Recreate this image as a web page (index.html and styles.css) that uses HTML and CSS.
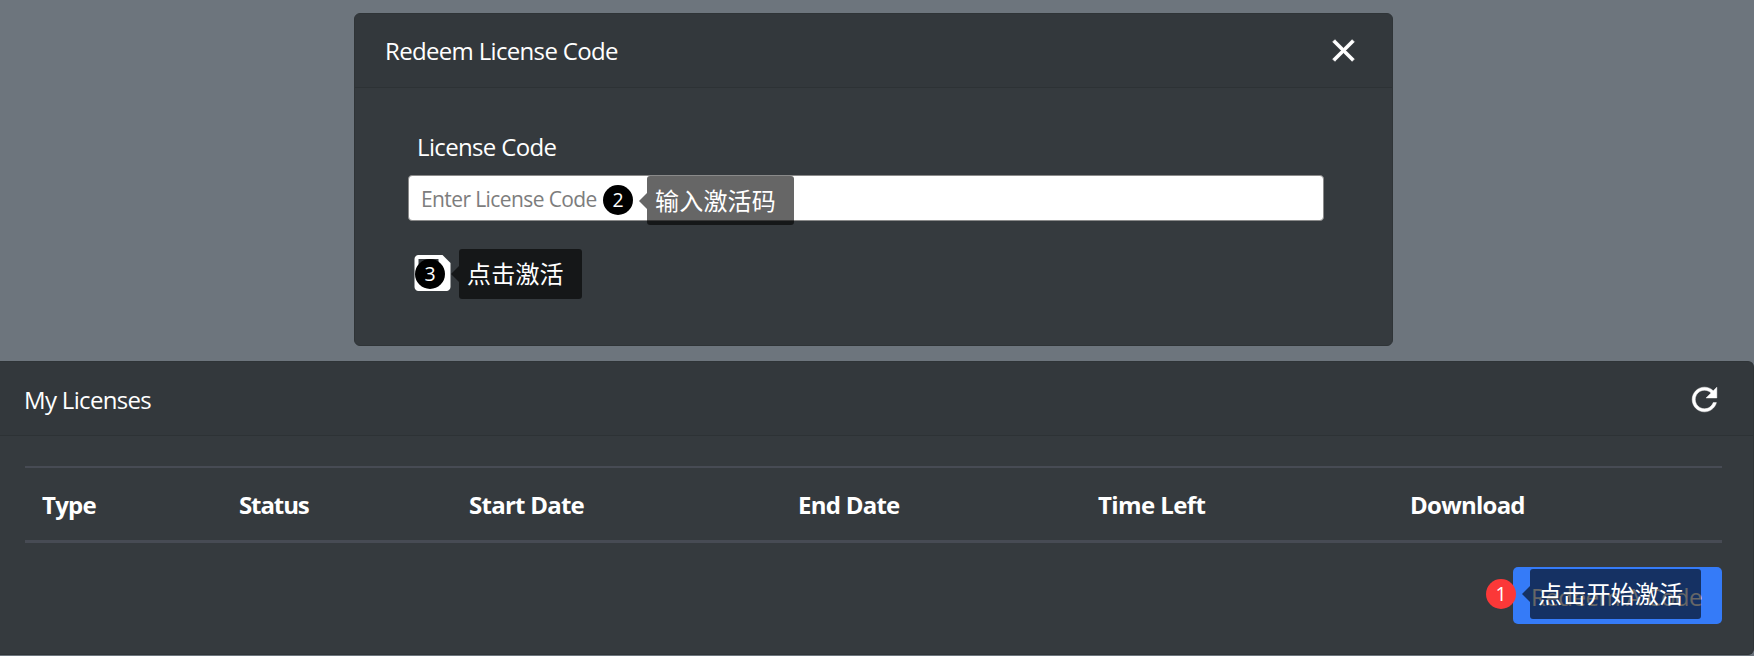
FILE: index.html
```html
<!DOCTYPE html>
<html lang="en">
<head>
<meta charset="utf-8">
<title>My Licenses</title>
<link rel="stylesheet" href="styles.css">
</head>
<body>
<section class="card redeem">
  <header class="card-header redeem-header">
    <h2 class="card-title redeem-title">Redeem License Code</h2>
    <svg class="icon icon-close" viewBox="0 0 24 24"><path d="M19 6.41L17.59 5 12 10.59 6.41 5 5 6.41 10.59 12 5 17.59 6.41 19 12 13.41 17.59 19 19 17.59 13.41 12z"/></svg>
  </header>
  <div class="redeem-body">
    <label class="label">License Code</label>
    <div class="field">
      <span class="placeholder">Enter License Code</span>
      <div class="note note-input">
        <span class="badge">2</span>
        <span class="tip">输入激活码</span>
      </div>
    </div>
    <div class="save">
      <svg class="save-icon" viewBox="0 0 24 24"><path d="M17 3H5c-1.11 0-2 .9-2 2v14c0 1.1.89 2 2 2h14c1.1 0 2-.9 2-2V7l-4-4zm-5 16c-1.66 0-3-1.34-3-3s1.34-3 3-3 3 1.34 3 3-1.34 3-3 3zm3-10H5V5h10v4z"/></svg>
      <div class="note note-save">
        <span class="badge">3</span>
        <span class="tip">点击激活</span>
      </div>
    </div>
  </div>
</section>
<section class="card licenses">
  <header class="card-header licenses-header">
    <h2 class="card-title licenses-title">My Licenses</h2>
    <svg class="icon icon-refresh" viewBox="0 0 24 24"><path d="M17.65 6.35C16.2 4.9 14.21 4 12 4c-4.42 0-7.99 3.58-7.99 8s3.57 8 7.99 8c3.73 0 6.84-2.55 7.73-6h-2.08c-.82 2.33-3.04 4-5.65 4-3.31 0-6-2.69-6-6s2.69-6 6-6c1.66 0 3.14.69 4.22 1.78L13 11h7V4l-2.35 2.35z"/></svg>
  </header>
  <div class="licenses-body">
    <div class="table-head">
      <span class="th">Type</span>
      <span class="th th-status">Status</span>
      <span class="th">Start Date</span>
      <span class="th">End Date</span>
      <span class="th th-left">Time Left</span>
      <span class="th">Download</span>
    </div>
    <div class="redeem-button">
      <span class="button-text">Redeem A Code</span>
      <div class="note note-button">
        <span class="badge badge-red">1</span>
        <span class="tip">点击开始激活</span>
      </div>
    </div>
  </div>
</section>
</body>
</html>
```
FILE: styles.css
```css
* { box-sizing: border-box; }
body {
  margin: 0;
  padding-top: 13px;
  height: 656px;
  overflow: hidden;
  background: #6d757d;
  color: #fff;
  font: 24px/36px "Open Sans", "Noto Sans CJK SC", sans-serif;
}
.card {
  background: #363a3e;
  background: #353a3e;
  border: 1px solid #2f3437;
}
.card-header {
  display: flex;
  justify-content: space-between;
  align-items: center;
  height: 74px;
  background: #33383c;
  border-bottom: 1px solid #2d3235;
}
.card-title { margin: 0; font-size: 24px; font-weight: 400; letter-spacing: -0.67px; }
.icon { width: 37px; height: 37px; fill: #fff; stroke: #fff; stroke-width: .3; }
.icon-close { margin-bottom: 1px; stroke-width: .5; }
.icon-refresh { margin-top: 1px; }

.redeem {
  width: 1039px;
  height: 333px;
  margin: 0 0 15px 354px;
  border-radius: 6px;
}
.redeem-header { padding: 0 30px; border-radius: 5px 5px 0 0; }
.redeem-body { padding: 41px 68px 0 53px; }
.label { display: block; margin-left: 9px; letter-spacing: -0.65px; }
.field {
  position: relative;
  display: flex;
  align-items: center;
  height: 46px;
  margin-top: 10px;
  padding-left: 12px;
  background: #fff;
  border: 1px solid #8a8a8a;
  border-radius: 4px;
}
.placeholder {
  padding-top: 2px;
  font-size: 21px;
  letter-spacing: -0.6px;
  color: #7d7d7d;
}
.save { position: relative; margin-top: 28px; height: 49px; }
.save-icon { display: block; width: 49px; height: 48px; fill: #fff; }

.note { position: absolute; display: flex; align-items: center; z-index: 2; }
.badge {
  width: 30px;
  height: 30px;
  border-radius: 50%;
  background: #000;
  font-size: 19.5px;
  line-height: 29px;
  text-align: center;
}
.badge-red { background: #fb3838; }
.tip {
  position: relative;
  height: 50px;
  margin-left: 14px;
  padding-left: 8px;
  background: rgba(0, 0, 0, .6);
  border-radius: 3px;
  line-height: 50px;
  letter-spacing: .2px;
  white-space: nowrap;
}
.tip::before {
  content: "";
  position: absolute;
  right: 100%;
  top: 17px;
  border: 8px solid transparent;
  border-left: 0;
  border-right-color: rgba(0, 0, 0, .6);
}
.note-input { left: 194px; top: 0; }
.note-input .tip { width: 147px; height: 49px; line-height: 49px; }
.note-input .badge { margin-bottom: 1px; }
.note-save { left: 7px; top: 0; }
.note-save .tip { width: 123px; }
.note-button { left: -27px; top: 2px; }
.note-button .tip { width: 171px; }

.licenses {
  height: 294px;
  border-left: 0;
  border-radius: 0 6px 6px 0;
}
.licenses-header { padding: 0 30px 0 24px; border-radius: 0 5px 0 0; }
.licenses-title { padding-top: 2px; }
.licenses-body {
  display: flex;
  flex-direction: column;
  padding: 30px 31px 0 25px;
}
.table-head {
  display: grid;
  grid-template-columns: 197px 230px 329px 300px 312px 1fr;
  align-items: center;
  height: 77px;
  padding: 2px 0 0 17px;
  border-top: 2px solid #474b54;
  border-bottom: 3px solid #474b54;
}
.th { font-weight: 700; white-space: nowrap; letter-spacing: -0.75px; }
.th-status { letter-spacing: -1.1px; }
.th-left { letter-spacing: -0.6px; }
.redeem-button {
  position: relative;
  display: flex;
  align-items: center;
  align-self: flex-end;
  width: 209px;
  height: 57px;
  margin-top: 24px;
  padding-left: 18px;
  background: #357bf8;
  border-radius: 5px;
}
.button-text { padding-top: 3px; white-space: nowrap; letter-spacing: -0.5px; }
```
